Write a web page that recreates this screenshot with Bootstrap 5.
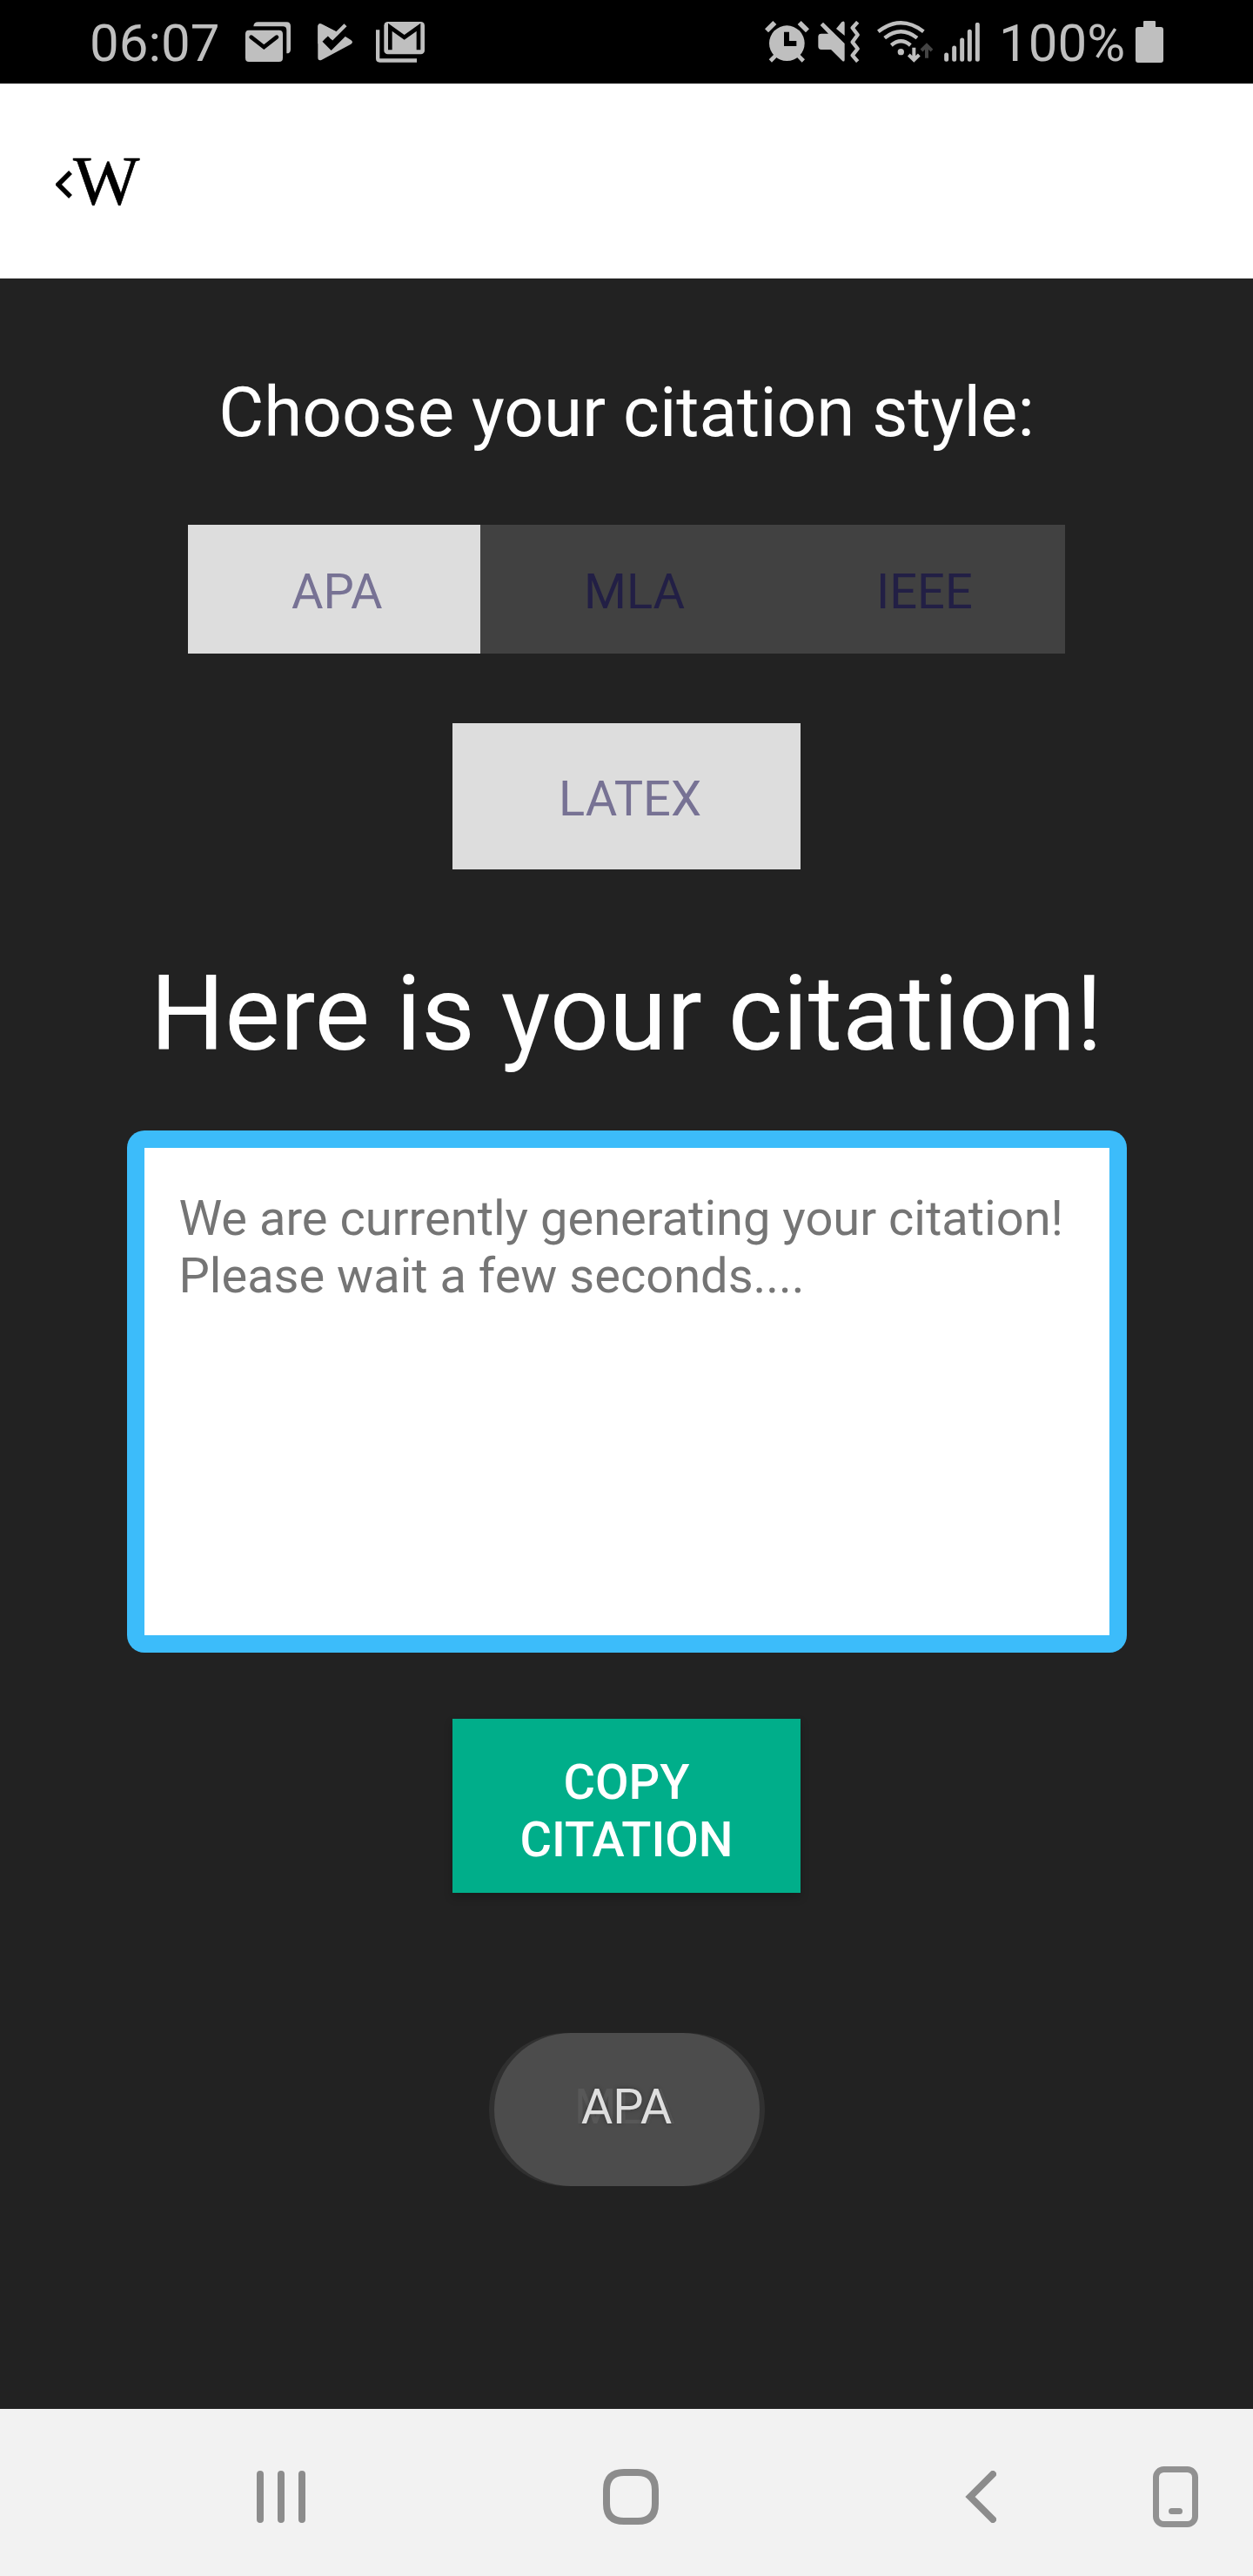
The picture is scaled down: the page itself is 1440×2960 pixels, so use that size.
<!DOCTYPE html>
<html lang="en">
<head>
<meta charset="utf-8">
<meta name="viewport" content="width=device-width, initial-scale=1">
<title>Citation</title>
<link href="https://cdn.jsdelivr.net/npm/bootstrap@5.3.0/dist/css/bootstrap.min.css" rel="stylesheet">
<style>
  body { width: 1440px; height: 2960px; overflow: hidden; background: #222; font-family: Roboto, "Liberation Sans", sans-serif; }
  svg { display: block; flex: none; }
  .status-bar { height: 96px; background: #000; color: #bfbfbf; font-size: 60px; line-height: 70px; padding-left: 103px; }
  .status-bar svg { fill: currentColor; }
  .clock { width: 179px; padding-top: 3px; flex: none; }
  .level { width: 179px; padding: 3px 0 0 22px; flex: none; }
  .app-bar { height: 224px; background: #fff; color: #000; padding-left: 64px; }
  .app-bar svg { margin-top: 8px; }
  .logo-letter { font-family: "Liberation Serif", serif; font-size: 81px; line-height: 92px; -webkit-text-stroke: .6px #000; }
  .style-title { font-size: 80px; line-height: 94px; margin: 107px 0 82px; font-weight: 400; }
  .style-row .btn { width: 336px; height: 148px; padding: 5px 0 0 119px; }
  .btn { border: 0; border-radius: 0; font-size: 56px; line-height: 66px; }
  .pick-on, .pick-on:hover { background: #ddd; color: #777294; }
  .pick-off, .pick-off:hover { background: #414141; color: #221f45; }
  .latex-btn { width: 400px; height: 168px; padding: 5px 0 0 122px; margin-top: 80px; }
  .result-title { font-size: 120px; line-height: 140px; margin: 96px 0 64px; font-weight: 400; }
  .cite-frame { width: 1149px; height: 600px; background: #3cbcfa; border-radius: 20px; padding: 20px; }
  .cite-box { background: #fff; color: #757575; font-size: 56px; line-height: 66px; padding: 48px 0 0 40px; white-space: nowrap; }
  .copy-btn, .copy-btn:hover { width: 400px; height: 200px; margin-top: 76px; padding: 11px 60px 0; background: #00ae8a; color: #fff; font-weight: 500; box-shadow: 0 5px 10px rgba(0,0,0,.2); }
  .toast-back { width: 317px; height: 176px; margin-top: 161px; border-radius: 88px; background: #303030; }
  .toast-pill { width: 305px; height: 176px; border-radius: 88px; background: #4c4c4c; font-size: 56px; line-height: 66px; }
  .toast-text { color: #dedede; text-shadow: 0 0 5px rgba(0,0,0,.35); }
  .toast-ghost { color: #585858; top: 0; left: -8px; }
  .toast-words { margin-top: -6px; }
  .nav-strip { height: 192px; background: #f2f2f2; padding: 10px 63px 0 295px; }
  .nav-strip svg { fill: none; stroke: #8c8c8c; stroke-width: 8; stroke-linecap: round; }
  .nav-home { margin-left: 342px; }
  .nav-back { margin-left: 352px; }
</style>
</head>
<body class="d-flex flex-column">
<div class="status-bar d-flex align-items-center flex-shrink-0">
  <span class="clock">06:07</span>
  <svg width="52" height="46" viewBox="606 75 156 138"><path d="M634 91Q635 76 650 76H748Q762 76 762 90V170Q762 184 748 184V104Q748 91 735 91Z"/><path fill-rule="evenodd" d="M618 104H722Q735 104 735 117V200Q735 213 722 213H618Q606 213 606 200V117Q606 104 618 104Z"/><path d="M626 128L670 162L714 128" fill="none" stroke="#000" stroke-width="14" stroke-linecap="round"/></svg>
  <svg width="40" height="43" viewBox="855 80 120 129" style="margin:0 27px 0 31px"><path d="M856 90Q857 78 869 82L919 108L946 122L970 137Q980 144 970 151L868 206Q856 209 856 198Z"/><path d="M881 133L902 154L958 98" fill="none" stroke="#000" stroke-width="27" stroke-miterlimit="2"/><path d="M856 90Q857 78 869 82L919 108L902 126L886 117L868 136V150H856Z"/><path d="M881 133L902 154L960 96" fill="none" stroke="#000" stroke-width="13"/><path d="M902 134L951 85" fill="none" stroke="currentColor" stroke-width="13"/></svg>
  <svg width="56" height="47" viewBox="1056 74 168 141"><path d="M1056 102H1069V201H1197V214H1069Q1056 214 1056 201Z"/><rect x="1084" y="74" width="140" height="112" rx="13"/><path d="M1105 171V93L1154 128L1203 93V171" fill="none" stroke="#000" stroke-width="14"/></svg>
  <svg style="margin-left:391px" width="51" height="48" viewBox="57 72 153 144"><circle cx="133" cy="149" r="61"/><path d="M63 106L91 78M204 106L176 78" stroke="currentColor" stroke-width="17"/><path d="M76 210L98 188M190 210L168 188" stroke="currentColor" stroke-width="14"/><path d="M132 110V150H166" fill="none" stroke="#000" stroke-width="18"/></svg>
  <svg style="margin-left:10px" width="49" height="48" viewBox="240 72 147 144"><path d="M258 77L332 150V206Q332 214 325 211L285 171H252Q241 171 241 160V126Q241 116 252 116H276L248 87ZM303 99L322 76Q332 70 332 80V123Z"/><path d="M377 76L359 96L377 120L359 145L377 168L359 191L377 212" fill="none" stroke="currentColor" stroke-width="13" stroke-linejoin="round"/></svg>
  <svg style="margin-left:19px" width="64" height="48" viewBox="444 72 192 144"><g fill="none" stroke="currentColor" stroke-width="13"><path d="M448 109Q526 49 604 109M470 131Q526 87 582 131M493 156Q526 128 559 156"/><path d="M571 164V205M553 189L571 207L589 189" stroke-width="12"/><path d="M615 200V159M597 174L615 156L633 174" stroke="#444" stroke-width="12"/></g><circle cx="526" cy="179" r="11"/></svg>
  <svg style="margin-left:13px" width="41" height="45" viewBox="675 81 123 135"><path d="M683 192V208M710 168V208M737 141V208M763 112V208M790 88V208" stroke="currentColor" stroke-width="15" stroke-linecap="round"/></svg>
  <span class="level">100%</span>
  <svg width="32" height="48" viewBox="0 0 32 48"><path d="M9 1Q9 0 10 0H22Q23 0 23 1V7H29Q32 7 32 10V45Q32 48 29 48H3Q0 48 0 45V10Q0 7 3 7H9Z"/></svg>
</div>
<header class="app-bar d-flex align-items-center flex-shrink-0">
  <svg width="20" height="32" viewBox="0 0 20 32" fill="none" stroke="#000" stroke-width="5.500"><path d="M17 2L3 16L17 30"/></svg>
  <span class="logo-letter">W</span>
</header>
<main class="d-flex flex-column align-items-center flex-grow-1 text-white">
  <h2 class="style-title">Choose your citation style:</h2>
  <div class="style-row d-flex">
    <button class="btn pick-on text-start">APA</button>
    <button class="btn pick-off text-start">MLA</button>
    <button class="btn pick-off text-start">IEEE</button>
  </div>
  <button class="btn pick-on latex-btn text-start">LATEX</button>
  <h1 class="result-title">Here is your citation!</h1>
  <div class="cite-frame"><div class="cite-box h-100">We are currently generating your citation!<br>Please wait a few seconds....</div></div>
  <button class="btn copy-btn">COPY CITATION</button>
  <div class="toast-back d-flex justify-content-center">
    <div class="toast-pill d-flex align-items-center justify-content-center">
      <div class="toast-words position-relative"><span class="toast-ghost position-absolute" aria-hidden="true">MLA</span><span class="toast-text position-relative">APA</span></div>
    </div>
  </div>
</main>
<nav class="nav-strip d-flex align-items-center flex-shrink-0">
  <svg width="56" height="60" viewBox="0 0 56 60"><path d="M4 4V56M28 4V56M52 4V56"/></svg>
  <svg class="nav-home" width="64" height="64" viewBox="0 0 64 64"><path d="M24 4H40Q60 4 60 24V40Q60 60 40 60H24Q4 60 4 40V24Q4 4 24 4Z"/></svg>
  <svg class="nav-back" width="36" height="60" viewBox="0 0 36 60"><path d="M32 4L6 30L32 56"/></svg>
  <svg class="ms-auto" width="52" height="70" viewBox="0 0 52 70" style="stroke:#919191;stroke-width:7"><rect x="3.5" y="3.5" width="45" height="63" rx="9"/><path d="M21.500 51.500H30.500"/></svg>
</nav>
<script src="https://cdn.jsdelivr.net/npm/bootstrap@5.3.0/dist/js/bootstrap.bundle.min.js"></script>
</body>
</html>
